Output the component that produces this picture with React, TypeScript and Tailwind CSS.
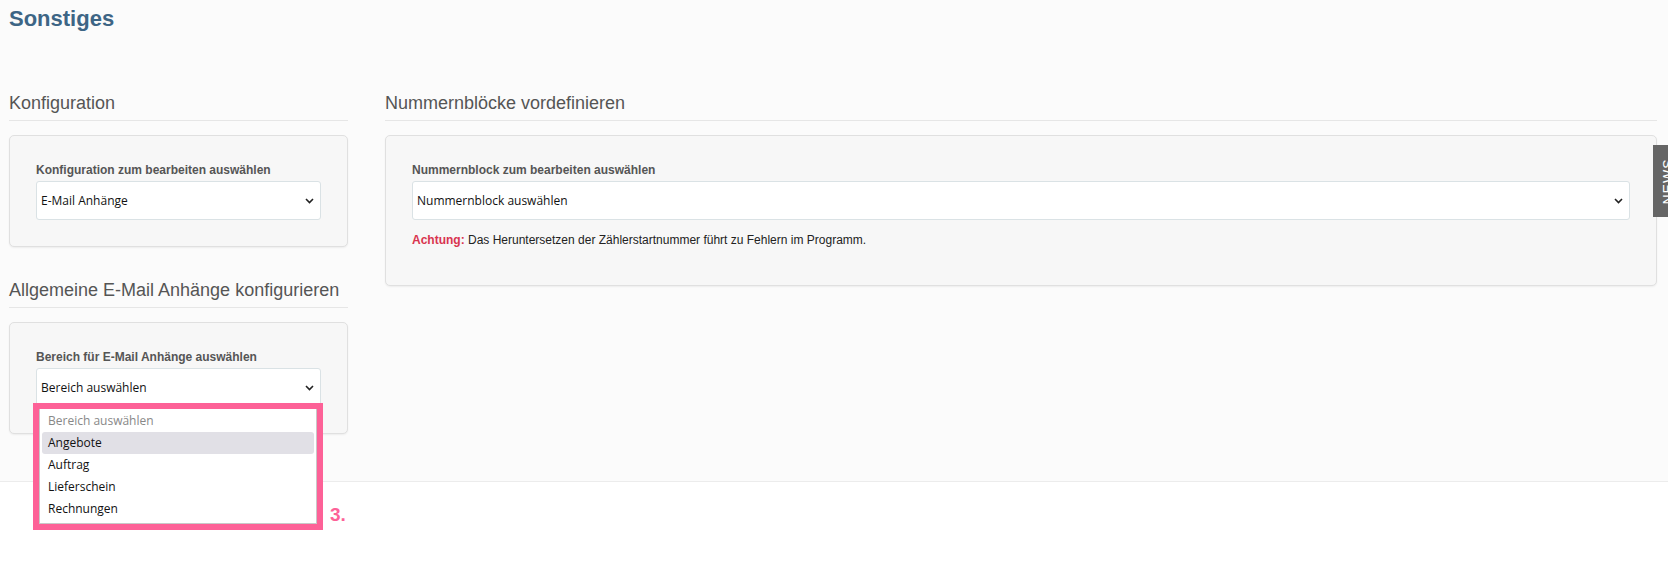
const ui = '"Open Sans", "Noto Sans", sans-serif';

function Chevron() {
  return (
    <svg width="9" height="6" viewBox="0 0 9 6" className="shrink-0">
      <path d="M1 1 L4.5 4.5 L8 1" fill="none" stroke="#222" strokeWidth="1.6" />
    </svg>
  );
}

function FakeSelect({ value }: { value: string }) {
  return (
    <div className="flex h-[39px] items-center justify-between rounded-[3px] border border-[#dae2e5] bg-white pl-[4px] pr-[6px]">
      <span className="text-[12px] text-[#111]" style={{ fontFamily: ui }}>
        {value}
      </span>
      <Chevron />
    </div>
  );
}

function SectionTitle({ children, className = '' }: { children: React.ReactNode; className?: string }) {
  return (
    <h2 className={`border-b border-[#e6e6e6] pb-[7px] text-[18px] leading-[20px] text-[#555] ${className}`}>
      {children}
    </h2>
  );
}

function Card({ children }: { children: React.ReactNode }) {
  return (
    <div className="mt-[14px] rounded-[5px] border border-[#e0e0e0] bg-[#f7f7f7] px-[26px] pt-[27px] shadow-[0_1px_2px_rgba(0,0,0,0.06)]">
      {children}
    </div>
  );
}

function Label({ children }: { children: React.ReactNode }) {
  return <div className="mb-[3px] text-[12px] font-bold leading-[15px] text-[#555]">{children}</div>;
}

const options = ['Angebote', 'Auftrag', 'Lieferschein', 'Rechnungen'];

export default function App() {
  return (
    <div
      className="relative h-[575px] w-[1668px] overflow-hidden bg-white"
      style={{ fontFamily: '"Liberation Sans", Arial, sans-serif' }}
    >
      {/* Main area */}
      <div className="h-[482px] border-b border-[#ececec] bg-[#fbfbfb] pl-[9px] pr-[11px]">
        <h1 className="pt-[7px] text-[22px] font-bold leading-[24px] text-[#3d6585]">Sonstiges</h1>

        <div className="mt-[62px] flex gap-[37px]">
          {/* Left column */}
          <div className="w-[339px] shrink-0">
            <SectionTitle>Konfiguration</SectionTitle>
            <Card>
              <div className="pb-[26px]">
                <Label>Konfiguration zum bearbeiten auswählen</Label>
                <FakeSelect value="E-Mail Anhänge" />
              </div>
            </Card>

            <SectionTitle className="mt-[33px]">Allgemeine E-Mail Anhänge konfigurieren</SectionTitle>
            <Card>
              <div className="pb-[26px]">
                <Label>Bereich für E-Mail Anhänge auswählen</Label>
                <FakeSelect value="Bereich auswählen" />
              </div>
            </Card>
          </div>

          {/* Right column */}
          <div className="flex-1">
            <SectionTitle>Nummernblöcke vordefinieren</SectionTitle>
            <Card>
              <div className="pb-[37px]">
                <Label>Nummernblock zum bearbeiten auswählen</Label>
                <FakeSelect value="Nummernblock auswählen" />
                <p className="mt-[13px] text-[12px] leading-[15px] text-[#222]">
                  <span className="font-bold text-[#d9344f]">Achtung:</span> Das Heruntersetzen der Zählerstartnummer führt
                  zu Fehlern im Programm.
                </p>
              </div>
            </Card>
          </div>
        </div>
      </div>

      {/* Opened dropdown, highlighted */}
      <div className="absolute left-[33px] top-[403px] w-[290px] border-[6px] border-[#fd6197]">
        <div className="border border-t-0 border-[#c8c8c8] bg-white px-[2px] pt-[1px] pb-[3px]" style={{ fontFamily: ui }}>
          <div className="flex h-[22px] items-center px-[6px] text-[12px] text-[#888]">Bereich auswählen</div>
          {options.map((o, i) => (
            <div
              key={o}
              className={`flex h-[22px] items-center rounded-[3px] px-[6px] text-[12px] text-[#111] ${
                i === 0 ? 'bg-[#e1e0e6]' : ''
              }`}
            >
              {o}
            </div>
          ))}
        </div>
      </div>
      <div className="absolute left-[330px] top-[505px] text-[19px] font-bold leading-[20px] text-[#fd6197]">3.</div>

      {/* News tab */}
      <div className="absolute left-[1653px] top-[145px] flex h-[72px] w-[30px] items-center justify-center bg-[#666]">
        <span className="-rotate-90 text-[14px] tracking-[1px] text-white">NEWS</span>
      </div>
    </div>
  );
}
